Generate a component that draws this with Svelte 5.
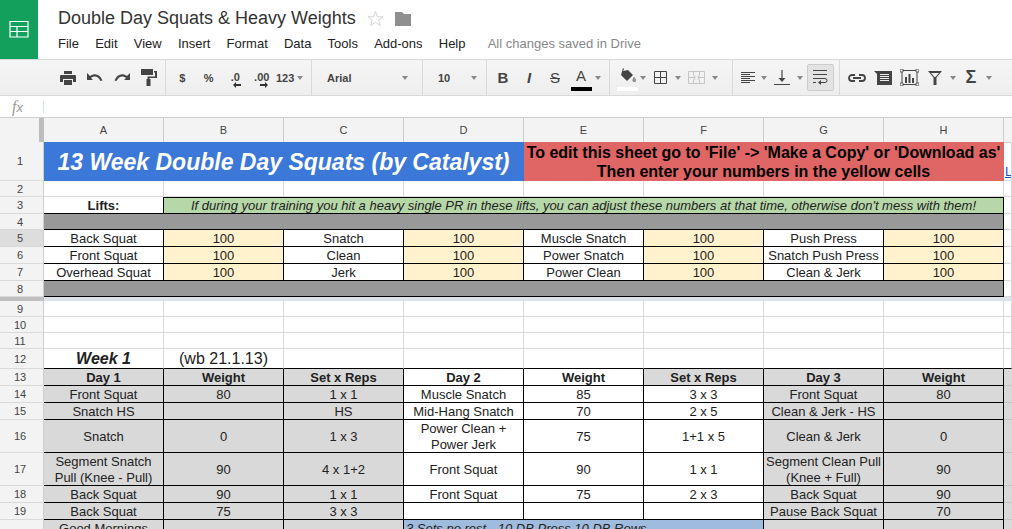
<script>
  const menus = ["File", "Edit", "View", "Insert", "Format", "Data", "Tools", "Add-ons", "Help"];
  const cols = ["A", "B", "C", "D", "E", "F", "G", "H"];

  const c = (t = "", cls = "", span = 1) => ({ t, cls, span });

  // one row of the lift table: name, number, name, number ...
  const lifts = (a, b, d, g) => [
    c(a, "k"), c("100", "k yellow"),
    c(b, "k"), c("100", "k yellow"),
    c(d, "k"), c("100", "k yellow"),
    c(g, "k"), c("100", "k yellow"),
    c()
  ];

  // week table: first three and last two + spill column are grey, the middle is white
  const week = (v, cls = "") => [
    c(v[0], "k grey " + cls), c(v[1], "k grey " + cls), c(v[2], "k grey " + cls),
    c(v[3], "k " + cls), c(v[4], "k " + cls),
    c(v[5], "k " + (cls ? "grey " + cls : "")),
    c(v[6], "k grey " + cls), c(v[7], "k grey " + cls),
    c("", "grey edge")
  ];

  const rows = [
    { n: 1, h: 39, cells: [
      c("13 Week Double Day Squats (by Catalyst)", "title", 4),
      c("To edit this sheet go to 'File' -> 'Make a Copy' or 'Download as'\nThen enter your numbers in the yellow cells", "red", 4),
      c("Link", "link")
    ] },
    { n: 2, h: 16, cells: [c(), c(), c(), c(), c(), c(), c(), c(), c()] },
    { n: 3, h: 17, cells: [
      c("Lifts:", "lifts"),
      c("If during your training you hit a heavy single PR in these lifts, you can adjust these numbers at that time, otherwise don't mess with them!", "note", 7),
      c()
    ] },
    { n: 4, h: 16, cells: [c("", "dark", 8), c()] },
    { n: 5, h: 17, sel: true, cells: lifts("Back Squat", "Snatch", "Muscle Snatch", "Push Press") },
    { n: 6, h: 17, cells: lifts("Front Squat", "Clean", "Power Snatch", "Snatch Push Press") },
    { n: 7, h: 17, cells: lifts("Overhead Squat", "Jerk", "Power Clean", "Clean & Jerk") },
    { n: 8, h: 16, cells: [c("", "dark", 8), c()] },
    { freeze: true },
    { n: 9, h: 16, cells: [c(), c(), c(), c(), c(), c(), c(), c(), c()] },
    { n: 10, h: 16, cells: [c(), c(), c(), c(), c(), c(), c(), c(), c()] },
    { n: 11, h: 16, cells: [c(), c(), c(), c(), c(), c(), c(), c(), c()] },
    { n: 12, h: 20, cells: [
      c("Week 1", "week under"), c("(wb 21.1.13)", "wb under"),
      c("", "under"), c("", "under"), c("", "under"), c("", "under"), c("", "under"), c("", "under"), c("", "under")
    ] },
    { n: 13, h: 17, cells: week(["Day 1", "Weight", "Set x Reps", "Day 2", "Weight", "Set x Reps", "Day 3", "Weight"], "b") },
    { n: 14, h: 17, cells: week(["Front Squat", "80", "1 x 1", "Muscle Snatch", "85", "3 x 3", "Front Squat", "80"]) },
    { n: 15, h: 17, cells: week(["Snatch HS", "", "HS", "Mid-Hang Snatch", "70", "2 x 5", "Clean & Jerk - HS", ""]) },
    { n: 16, h: 33, cells: week(["Snatch", "0", "1 x 3", "Power Clean +\nPower Jerk", "75", "1+1 x 5", "Clean & Jerk", "0"]) },
    { n: 17, h: 33, cells: week(["Segment Snatch\nPull (Knee - Pull)", "90", "4 x 1+2", "Front Squat", "90", "1 x 1", "Segment Clean Pull\n(Knee + Full)", "90"]) },
    { n: 18, h: 17, cells: week(["Back Squat", "90", "1 x 1", "Front Squat", "75", "2 x 3", "Back Squat", "90"]) },
    { n: 19, h: 17, cells: week(["Back Squat", "75", "3 x 3", "", "", "", "Pause Back Squat", "70"]) },
    { n: 20, h: 33, cells: [
      c("Good Mornings\n3 x 10", "k grey"), c("", "k grey"), c("", "k grey"),
      c("3 Sets no rest - 10 DB Press 10 DB Rows", "k blue", 3),
      c("", "k grey"), c("", "k grey"), c("", "grey edge")
    ] }
  ];
</script>

<div class="page">
  <header class="top">
    <div class="logo">
      <svg width="20" height="17" viewBox="0 0 20 17">
        <path d="M1 .5h18v15.500H1zM1 5.500h18M1 10.500h18M8 5.500V16" fill="none" stroke="#fff" stroke-width="1.200" />
      </svg>
    </div>
    <div class="heading">
      <div class="name">
        <span>Double Day Squats &amp; Heavy Weights</span>
        <svg class="star" width="17" height="17" viewBox="0 0 17 17">
          <path d="M8.500 1.500l2 5.200h5.500l-4.400 3.300 1.700 5.500-4.800-3.300-4.800 3.300 1.700-5.500-4.400-3.300h5.500z" fill="#fff" stroke="#d4d4d4" />
        </svg>
        <svg class="folder" width="16" height="14" viewBox="0 0 16 14">
          <path d="M0 0h7l2 2h7v12H0z" fill="#8f8f8f" />
        </svg>
      </div>
      <nav class="menu">
        {#each menus as m}
          <span>{m}</span>
        {/each}
        <span class="saved">All changes saved in Drive</span>
      </nav>
    </div>
  </header>

  <div class="toolbar">
    <div class="group g1">
      <button aria-label="print"><svg width="16" height="14" viewBox="0 0 16 14"><path d="M4 0h8v3H4zM1 4h14a1 1 0 0 1 1 1v6h-3V8H3v3H0V5a1 1 0 0 1 1-1zM4 9h8v5H4z" fill="#444" /></svg></button>
      <button aria-label="undo"><svg width="16" height="9" viewBox="0 0 16 9"><path d="M0 0v7h6L4 5c3-2.500 7-2 9.500 3l2-.5C13 1.500 8-.500 3 3z" fill="#444" /></svg></button>
      <button aria-label="redo"><svg width="16" height="9" viewBox="0 0 16 9"><path d="M16 0v7h-6l2-2C9 2.500 5 3 2.500 8l-2-.5C3 1.500 8-.500 13 3z" fill="#444" /></svg></button>
      <button aria-label="paint"><svg width="16" height="17" viewBox="0 0 16 17"><path d="M0 0h12v6H0zM13 2h3v7H8.500v1h1v7h-4v-7h1V7.500h7.500V3.500H13z" fill="#444" /></svg></button>
    </div>
    <div class="group g2">
      <button class="sym">$</button>
      <button class="sym">%</button>
      <button aria-label="decrease decimals" class="dec"><span>.0</span><svg width="8" height="6" viewBox="0 0 8 6"><path d="M8 2H3V0L0 3l3 3V4h5z" fill="#333" /></svg></button>
      <button aria-label="increase decimals" class="dec"><span>.00</span><svg width="8" height="6" viewBox="0 0 8 6"><path d="M0 2h5V0l3 3-3 3V4H0z" fill="#333" /></svg></button>
      <button class="sym num">123<i class="arrow"></i></button>
    </div>
    <div class="group g3"><span>Arial</span><i class="arrow"></i></div>
    <div class="group g4"><span>10</span><i class="arrow"></i></div>
    <div class="group g5">
      <button class="fmt bold">B</button>
      <button class="fmt ital">I</button>
      <button class="fmt strike">S</button>
      <button class="fmt color">A<b class="swatch"></b></button>
      <i class="arrow"></i>
    </div>
    <div class="group g6">
      <button class="fill" aria-label="fill">
        <svg width="17" height="14" viewBox="0 0 17 14"><path d="M3 0l1 1-1 2 5-1 5 5-6 6-6-6zM14 9c1 1.500 2 2.500 2 3.300a1.700 1.700 0 0 1-3.400 0c0-.800.700-1.800 1.400-3.300z" fill="#444" /><path d="M14 9c1 1.500 2 2.500 2 3.300a1.700 1.700 0 0 1-3.400 0c0-.800.700-1.800 1.400-3.300z" fill="#999" /></svg>
        <b class="swatch white"></b>
      </button>
      <i class="arrow"></i>
      <button aria-label="borders"><svg width="13" height="13" viewBox="0 0 13 13"><path d="M.5.500h12v12H.5zM6.500.500v12M.5 6.500h12" fill="none" stroke="#444" /></svg></button>
      <i class="arrow"></i>
      <button aria-label="merge"><svg width="17" height="13" viewBox="0 0 17 13"><path d="M.5.500h16v12H.5zM.5 6.500h5M11.500 6.500h5M5.500.500v4M5.500 8.500v4M11.500.500v4M11.500 8.500v4" fill="none" stroke="#c6c6c6" /><path d="M4 6.500h3M7 4.500v4l-2-2zM13 6.500h-3M10 4.500v4l2-2z" fill="#c6c6c6" stroke="#c6c6c6" stroke-width=".5" /></svg></button>
      <i class="arrow"></i>
    </div>
    <div class="group g7">
      <button aria-label="align"><svg width="14" height="12" viewBox="0 0 14 12"><path d="M0 .500h14M0 2.500h9M0 4.500h14M0 6.500h9M0 8.500h14M0 10.500h9" stroke="#444" fill="none" /></svg></button>
      <i class="arrow"></i>
      <button aria-label="valign"><svg width="16" height="15" viewBox="0 0 16 15"><path d="M8 0v9M0 14.500h16" stroke="#444" stroke-width="1.200" fill="none" /><path d="M4.500 8h7L8 12z" fill="#444" /></svg></button>
      <i class="arrow"></i>
      <button class="wrap" aria-label="wrap"><svg width="15" height="15" viewBox="0 0 15 15"><path d="M0 .500h14M0 4.500h14M0 8.500h12a2 2 0 0 1 0 4H7M0 12.500h3" stroke="#444" fill="none" /><path d="M8 10v5l-3-2.500z" fill="#444" /></svg></button>
    </div>
    <div class="group g8">
      <button aria-label="link"><svg width="18" height="8" viewBox="0 0 18 8"><path d="M7 1H4a3 3 0 0 0 0 6h3M11 1h3a3 3 0 0 1 0 6h-3M5 4h8" stroke="#444" stroke-width="1.800" fill="none" /></svg></button>
      <button aria-label="comment"><svg width="18" height="14" viewBox="0 0 18 14"><path d="M0 0h18v14H3V3z" fill="#444" /><path d="M6 3.500h9M6 5.500h9M6 7.500h9M6 9.500h9" stroke="#eee" fill="none" /></svg></button>
      <button aria-label="chart"><svg width="19" height="17" viewBox="0 0 19 17"><path d="M2 1.500h15v14H2z" fill="none" stroke="#444" /><path d="M5 8h2v6H5zM8.500 5h2v9h-2zM12 9h2v5h-2z" fill="#444" /><path d="M0 0h3v3H0zM16 0h3v3h-3zM0 14h3v3H0zM16 14h3v3h-3z" fill="#eee" stroke="#444" stroke-width=".8" /></svg></button>
      <button aria-label="filter"><svg width="14" height="14" viewBox="0 0 14 14"><path d="M0 0h14L8.500 6.500V14h-3V6.500zM3 2l3.500 4h1L11 2z" fill="#444" fill-rule="evenodd" /></svg></button>
      <i class="arrow"></i>
      <button class="sigma">&Sigma;</button>
      <i class="arrow"></i>
    </div>
  </div>

  <div class="formula">
    <span class="fx">f<small>x</small></span>
    <i class="caret"></i>
  </div>

  <div class="sheet">
    <div class="row head">
      <div class="corner"></div>
      {#each cols as col}
        <div class="colhead">{col}</div>
      {/each}
      <div class="colhead"></div>
    </div>

    {#each rows as row}
      {#if row.freeze}
        <div class="freeze"></div>
      {:else}
        <div class="row" style="height: {row.h}px">
          <div class="rowhead" class:sel={row.sel}>{row.n}</div>
          {#each row.cells as cell}
            <div class="cell {cell.cls}" style="grid-column: span {cell.span}">{cell.t}</div>
          {/each}
        </div>
      {/if}
    {/each}
  </div>
</div>

<style>
  :global(body) {
    overflow: hidden;
    background: #fff;
  }
  .page {
    width: 1012px;
    height: 529px;
    overflow: hidden;
    font-family: "Liberation Sans", Arial, sans-serif;
    color: #222;
  }
  button {
    border: 0;
    padding: 0;
    background: none;
    font: inherit;
    display: flex;
    align-items: center;
    justify-content: center;
  }

  /* title + menu */
  .top {
    display: flex;
    height: 59px;
  }
  .logo {
    width: 38px;
    background: #12a05c;
    display: flex;
    align-items: center;
    justify-content: center;
  }
  .heading {
    padding-left: 20px;
    flex: 1;
  }
  .name {
    display: flex;
    align-items: center;
    height: 36px;
    font-size: 18px;
    color: #333;
  }
  .star {
    margin-left: 11px;
    margin-top: 1px;
  }
  .folder {
    margin-left: 11px;
    margin-top: 1px;
  }
  .menu {
    display: flex;
    gap: 16.200px;
    font-size: 13px;
    height: 15px;
    line-height: 15px;
  }
  .saved {
    color: #888;
    margin-left: 6px;
  }

  /* toolbar */
  .toolbar {
    display: flex;
    height: 35px;
    border-top: 1px solid #d9d9d9;
    border-bottom: 1px solid #d9d9d9;
    background: linear-gradient(#f5f5f5, #eee);
    font-size: 11px;
    font-weight: bold;
    color: #444;
  }
  .group {
    display: flex;
    align-items: center;
    border-right: 1px solid #d9d9d9;
    box-sizing: border-box;
    flex: none;
  }
  .group button {
    height: 26px;
  }
  .arrow {
    display: block;
    width: 0;
    height: 0;
    border: 3.5px solid transparent;
    border-top: 4px solid #888;
    border-bottom: 0;
  }
  .g1 {
    width: 166px;
    padding-left: 54px;
  }
  .g1 button {
    width: 27px;
  }
  .g2 {
    width: 146px;
    padding-left: 3px;
  }
  .g2 button {
    width: 26.500px;
  }
  .sym {
    font-size: 11px;
    color: #444;
    font-weight: bold;
  }
  .g2 .num {
    width: auto;
    margin-left: 1px;
    gap: 3px;
  }
  .dec {
    position: relative;
    font-size: 11px;
    color: #444;
    font-weight: bold;
  }
  .dec svg {
    position: absolute;
    left: 11px;
    bottom: 3px;
  }
  .dec span {
    margin-top: -2px;
  }
  .g3 {
    width: 111px;
    padding: 0 14px 0 15px;
    justify-content: space-between;
  }
  .g4 {
    width: 64px;
    padding: 0 9px 0 15px;
    justify-content: space-between;
  }
  .g5 {
    width: 123px;
    padding-left: 3px;
  }
  .fmt {
    width: 26px;
    font-size: 15px;
    color: #444;
  }
  .bold {
    font-weight: bold;
  }
  .ital {
    font-style: italic;
    font-weight: bold;
  }
  .strike {
    font-weight: normal;
    text-decoration: line-through;
  }
  .color {
    position: relative;
    font-weight: normal;
    padding-bottom: 4px;
  }
  .swatch {
    position: absolute;
    left: 3px;
    bottom: 0;
    width: 21px;
    height: 4px;
    background: #000;
  }
  .swatch.white {
    background: #fff;
    left: 1px;
  }
  .g5 .arrow {
    margin-left: 1px;
  }
  .g6 {
    width: 123px;
    padding-left: 6px;
  }
  .fill {
    position: relative;
    width: 24px;
    padding-bottom: 6px;
  }
  .g6 button:nth-of-type(2) {
    width: 29px;
  }
  .g6 button:nth-of-type(3) {
    width: 31px;
  }
  .g7 {
    width: 107px;
    padding-left: 1px;
  }
  .g7 button {
    width: 27px;
  }
  .g7 button:nth-of-type(2) {
    width: 30px;
  }
  .g7 .wrap {
    width: 27px;
    height: 27px;
    margin-left: 4px;
    background: #e3e3e3;
    border: 1px solid #ccc;
    border-radius: 2px;
    box-sizing: border-box;
  }
  .g8 {
    border: 0;
    padding-left: 4px;
  }
  .g8 button {
    width: 26px;
  }
  .g8 .arrow {
    margin: 0 0 0 2px;
  }
  .sigma {
    font-size: 18px;
    color: #444;
    margin-left: 2px;
  }

  /* formula bar */
  .formula {
    height: 21px;
    display: flex;
    align-items: center;
    border-bottom: 1px solid #cfcfcf;
  }
  .fx {
    width: 43px;
    box-sizing: border-box;
    padding-left: 12px;
    font: italic 16px "Liberation Serif", serif;
    color: #999;
  }
  .fx small {
    font-size: 13px;
    font-family: "Liberation Sans", sans-serif;
  }
  .caret {
    width: 1px;
    height: 12px;
    background: #cde4ee;
  }

  /* grid */
  .row {
    display: grid;
    grid-template-columns: 44px repeat(8, 120px) 1fr;
    box-sizing: border-box;
  }
  .head {
    height: 24px;
  }
  .corner {
    background: #f3f3f3;
    border-right: 5px solid #bdbdbd;
    border-bottom: 1px solid #d0d0d0;
    box-sizing: border-box;
  }
  .colhead {
    background: #f3f3f3;
    border-right: 1px solid #cfcfcf;
    border-bottom: 1px solid #cfcfcf;
    font-size: 11px;
    color: #444;
    text-align: center;
    line-height: 24px;
  }
  .colhead:last-child {
    border-right: 0;
  }
  .rowhead {
    background: #f3f3f3;
    border-right: 1px solid #cfcfcf;
    border-bottom: 1px solid #d9d9d9;
    font-size: 11px;
    color: #444;
    display: flex;
    align-items: center;
    justify-content: center;
    padding-right: 3px;
    box-sizing: border-box;
  }
  .rowhead.sel {
    background: #ddd;
  }
  .cell {
    border-right: 1px solid #d9d9d9;
    border-bottom: 1px solid #d9d9d9;
    box-sizing: border-box;
    padding-top: 1px;
    font-size: 13px;
    line-height: 16px;
    color: #222;
    display: flex;
    align-items: center;
    justify-content: center;
    text-align: center;
    white-space: pre-line;
    overflow: hidden;
    min-width: 0;
  }
  .k {
    border-color: #000;
  }
  .under {
    border-bottom-color: #000;
  }
  .yellow {
    background: #fff2cc;
  }
  .grey {
    background: #d9d9d9;
  }
  .edge {
    border-right: 0;
    border-bottom-color: #c4c4c4;
  }
  .b {
    font-weight: bold;
  }
  .title {
    background: #3c78d8;
    color: #fff;
    font-size: 23px;
    font-weight: bold;
    font-style: italic;
    border-color: #3c78d8;
  }
  .red {
    background: #e06666;
    color: #000;
    font-size: 16px;
    font-weight: bold;
    line-height: 19px;
    white-space: pre;
    border-color: #e06666;
  }
  .link {
    color: #1155cc;
    text-decoration: underline;
    justify-content: flex-start;
    align-items: flex-end;
    white-space: nowrap;
    padding-left: 1px;
  }
  .lifts {
    font-weight: bold;
    border-bottom-color: #000;
    border-right-color: #000;
  }
  .note {
    background: #b6d7a8;
    font-style: italic;
    border: 1px solid #000;
    border-width: 1px 1px 1px 0;
    padding-top: 0;
    white-space: nowrap;
  }
  .dark {
    background: #999;
    border-color: #000;
  }
  .week {
    font-size: 16px;
    font-weight: bold;
    font-style: italic;
  }
  .wb {
    font-size: 16px;
    overflow: visible;
    white-space: nowrap;
  }
  .row .blue {
    background: #9fbbdd;
    justify-content: flex-start;
    align-items: flex-start;
    font-style: italic;
    padding-left: 2px;
    white-space: nowrap;
  }
  .freeze {
    height: 4px;
    background: linear-gradient(90deg, #c0c0c0 44px, #dde1ea 44px);
  }
</style>
